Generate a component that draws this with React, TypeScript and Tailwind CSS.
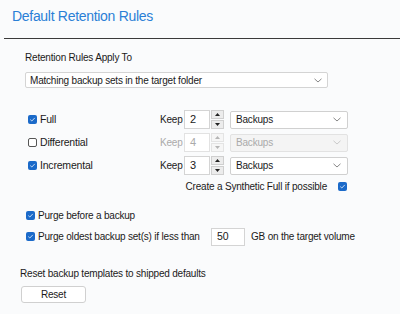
import React from 'react';

const font = { fontFamily: '"Liberation Sans", Arial, sans-serif' };

function Check({ checked, disabled }: { checked: boolean; disabled?: boolean }) {
  if (checked) {
    return (
      <span className="inline-flex h-[9px] w-[9px] flex-shrink-0 items-center justify-center rounded-[2px] bg-[#1b6ac9]">
        <svg width="7" height="7" viewBox="0 0 7 7">
          <path d="M1.3 3.6 L2.8 5 L5.8 1.9" fill="none" stroke="#dce9f8" strokeWidth="0.9" />
        </svg>
      </span>
    );
  }
  return (
    <span
      className={`inline-block h-[9px] w-[9px] flex-shrink-0 rounded-[2px] border bg-white ${
        disabled ? 'border-[#bbb]' : 'border-[#555]'
      }`}
    />
  );
}

function Chevron({ light }: { light?: boolean }) {
  return (
    <svg width="8" height="5" viewBox="0 0 8 5">
      <path d="M0.5 0.8 L4 4 L7.5 0.8" fill="none" stroke={light ? '#c4c4c4' : '#7a7a7a'} strokeWidth="0.9" />
    </svg>
  );
}

function Spinner({ value, disabled }: { value: string; disabled?: boolean }) {
  const tri = disabled ? '#b5b5b5' : '#222';
  return (
    <div className="flex h-[19px]">
      <div
        className={`flex w-[26px] items-center border pl-[5px] text-[11px] ${
          disabled ? 'border-[#e2e2e2] bg-white text-[#aaa]' : 'border-[#d4d4d4] bg-white text-[#1a1a1a]'
        }`}
      >
        {value}
      </div>
      <div className="ml-[1px] flex w-[13px] flex-col gap-[1px]">
        <div className={`flex h-[9px] items-center justify-center border ${disabled ? 'border-[#e4e4e4] bg-[#f6f6f6]' : 'border-[#cfcfcf] bg-[#ececec]'}`}>
          <svg width="5" height="3" viewBox="0 0 5 3">
            <path d="M0 3 L2.5 0 L5 3 Z" fill={tri} />
          </svg>
        </div>
        <div className={`flex h-[9px] items-center justify-center border ${disabled ? 'border-[#e4e4e4] bg-[#f6f6f6]' : 'border-[#cfcfcf] bg-[#ececec]'}`}>
          <svg width="5" height="3" viewBox="0 0 5 3">
            <path d="M0 0 L2.5 3 L5 0 Z" fill={tri} />
          </svg>
        </div>
      </div>
    </div>
  );
}

function BackupSelect({ disabled }: { disabled?: boolean }) {
  return (
    <div
      className={`ml-[6px] flex h-[18px] w-[118px] items-center justify-between rounded-[2px] border pl-[5px] pr-[6px] ${
        disabled ? 'border-[#e2e2e2] bg-[#f4f4f4] text-[#aaa]' : 'border-[#d0d0d0] bg-white text-[#1a1a1a]'
      }`}
    >
      <span>Backups</span>
      <Chevron light={disabled} />
    </div>
  );
}

const rows = [
  { label: 'Full', checked: true, value: '2' },
  { label: 'Differential', checked: false, value: '4', disabled: true },
  { label: 'Incremental', checked: true, value: '3' },
];

export default function App() {
  return (
    <div className="h-[314px] w-[400px] overflow-hidden bg-[#fafbfc] text-[10px] tracking-[-0.2px] text-[#1a1a1a]" style={font}>
      {/* Header */}
      <div className="ml-[4px] h-[39px] border-b border-[#3a3a3a] pl-[8px] pt-[6px]">
        <h1 className="text-[14px] leading-[20px] tracking-[-0.3px] text-[#2a7fd6]">Default Retention Rules</h1>
      </div>

      {/* Apply to */}
      <div className="pl-[25px]">
        <div className="mt-[12px] leading-[14px]">Retention Rules Apply To</div>
        <div className="mt-[7px] flex h-[16px] w-[303px] items-center justify-between rounded-[2px] border border-[#d4d4d4] bg-white pl-[4px] pr-[5px]">
          <span>Matching backup sets in the target folder</span>
          <Chevron />
        </div>
      </div>

      {/* Rule rows */}
      <div className="mt-[20px] flex flex-col">
        {rows.map((r) => (
          <div key={r.label} className="flex h-[23px] items-center">
            <div className="flex w-[160px] items-center gap-[3px] pl-[28px]">
              <Check checked={r.checked} />
              <span className="text-[10.5px]">{r.label}</span>
            </div>
            <span className={`w-[24px] ${r.disabled ? 'text-[#aaa]' : ''}`}>Keep</span>
            <Spinner value={r.value} disabled={r.disabled} />
            <BackupSelect disabled={r.disabled} />
          </div>
        ))}
        <div className="flex h-[18px] w-[347px] items-center justify-end gap-[11px]">
          <span>Create a Synthetic Full if possible</span>
          <Check checked />
        </div>
      </div>

      {/* Purge */}
      <div className="mt-[10px] flex flex-col pl-[26px]">
        <div className="flex h-[21px] items-center gap-[3px]">
          <Check checked />
          <span>Purge before a backup</span>
        </div>
        <div className="flex h-[21px] items-center">
          <div className="flex w-[185px] items-center gap-[3px]">
            <Check checked />
            <span>Purge oldest backup set(s) if less than</span>
          </div>
          <div className="flex h-[18px] w-[34px] items-center border border-[#d4d4d4] bg-white pl-[5px] text-[10.5px]">50</div>
          <span className="ml-[6px]">GB on the target volume</span>
        </div>
      </div>

      {/* Reset */}
      <div className="pl-[20px]">
        <div className="mt-[20px] leading-[14px]">Reset backup templates to shipped defaults</div>
        <button className="ml-[1px] mt-[5px] flex h-[17px] w-[65px] items-center justify-center rounded-[3px] border border-[#d0d0d0] bg-white">
          Reset
        </button>
      </div>
    </div>
  );
}
